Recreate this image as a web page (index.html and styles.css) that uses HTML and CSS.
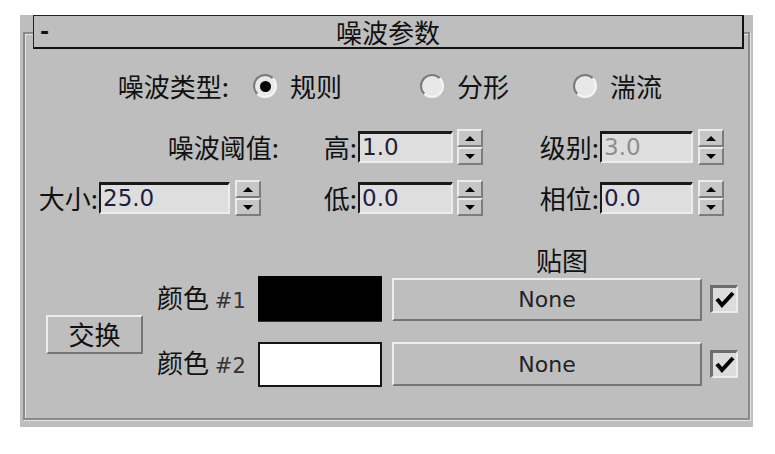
FILE: index.html
```html
<!DOCTYPE html>
<html lang="zh-CN">
<head>
<meta charset="UTF-8" />
<title>噪波参数</title>
<link rel="stylesheet" href="styles.css">
</head>
<body>
  <div class="rollout">
    <div class="rollout-title">
      <span class="collapse">-</span>
      <span class="title-text">噪波参数</span>
    </div>

    <div class="group">
      <!-- noise type -->
      <div class="row row-type">
        <span class="lbl lbl-type">噪波类型:</span>
        <span class="radio checked"></span><span class="opt">规则</span>
        <span class="radio radio-2"></span><span class="opt">分形</span>
        <span class="radio radio-3"></span><span class="opt">湍流</span>
      </div>

      <!-- threshold high / levels -->
      <div class="row row-spin row-high">
        <span class="lbl lbl-thresh">噪波阈值:</span>
        <span class="lbl lbl-mid">高:</span>
        <div class="num num-mid">1.0</div>
        <div class="spin"><span class="up"></span><span class="down"></span></div>
        <span class="lbl lbl-right">级别:</span>
        <div class="num num-right disabled">3.0</div>
        <div class="spin spin-right"><span class="up"></span><span class="down"></span></div>
      </div>

      <!-- size / low / phase -->
      <div class="row row-spin row-low">
        <span class="lbl lbl-size">大小:</span>
        <div class="num num-size">25.0</div>
        <div class="spin spin-size"><span class="up"></span><span class="down"></span></div>
        <span class="lbl lbl-low">低:</span>
        <div class="num num-mid">0.0</div>
        <div class="spin"><span class="up"></span><span class="down"></span></div>
        <span class="lbl lbl-right">相位:</span>
        <div class="num num-right">0.0</div>
        <div class="spin spin-right"><span class="up"></span><span class="down"></span></div>
      </div>

      <div class="row row-maps">
        <span class="maps-title">贴图</span>
      </div>

      <!-- colors -->
      <div class="colors">
        <button class="btn swap">交换</button>
        <div class="color-rows">
          <div class="color-row">
            <span class="color-lbl">颜色 <span class="idx">#1</span></span>
            <span class="swatch black"></span>
            <button class="btn map-btn">None</button>
            <span class="check">
              <svg width="22" height="20" viewBox="0 0 22 20"><path d="M3 9 L8 15 L19 3" fill="none" stroke="#000" stroke-width="4"/></svg>
            </span>
          </div>
          <div class="color-row row-2">
            <span class="color-lbl">颜色 <span class="idx">#2</span></span>
            <span class="swatch white"></span>
            <button class="btn map-btn">None</button>
            <span class="check">
              <svg width="22" height="20" viewBox="0 0 22 20"><path d="M3 9 L8 15 L19 3" fill="none" stroke="#000" stroke-width="4"/></svg>
            </span>
          </div>
        </div>
      </div>
    </div>
  </div>
</body>
</html>
```

FILE: styles.css
```css
* {
  box-sizing: border-box;
}
body {
  margin: 0;
  background: #fff;
}
.rollout {
  margin: 15px 0 0 20px;
  width: 733px;
  height: 412px;
  background: #bebebe;
  font-family: "Noto Sans CJK SC", sans-serif;
  font-size: 26px;
  line-height: 30px;
  color: #111;
}

/* title bar */
.rollout-title {
  position: relative;
  z-index: 1;
  margin-left: 13px;
  width: 711px;
  height: 34px;
  background: #bebebe;
  border-top: 1px solid #222;
  border-left: 1px solid #222;
  border-right: 2px solid #111;
  border-bottom: 2px solid #111;
  display: grid;
  grid-template-columns: 40px 1fr 40px;
  align-items: center;
}
.collapse {
  padding-left: 6px;
  font-family: "DejaVu Sans", sans-serif;
  font-weight: bold;
  font-size: 22px;
  line-height: 30px;
}
.title-text {
  text-align: center;
  line-height: 30px;
}

/* group frame */
.group {
  margin: -17px 0 0 3px;
  width: 727px;
  height: 388px;
  border: 2px solid #8a8a8a;
  box-shadow: inset 1px 1px 0 #e4e4e4, 1px 1px 0 #e4e4e4;
}
.row {
  display: flex;
  align-items: center;
}
.lbl {
  flex: none;
  text-align: right;
  white-space: nowrap;
}

/* noise type */
.row-type {
  margin-top: 37px;
  height: 30px;
}
.lbl-type { width: 204px; }
.radio {
  flex: none;
  width: 24px;
  height: 24px;
  margin-left: 24px;
  border-radius: 50%;
  border: 2px solid #f4f4f4;
  border-top-color: #7a7a7a;
  border-left-color: #7a7a7a;
  background: #e8e8e8;
  display: flex;
  align-items: center;
  justify-content: center;
}
.radio.checked::after {
  content: "";
  width: 11px;
  height: 11px;
  border-radius: 50%;
  background: #000;
}
.radio-2 { margin-left: 78px; }
.radio-3 { margin-left: 64px; }
.opt {
  margin-left: 13px;
}

/* spinners */
.row-spin { height: 36px; }
.row-high { margin-top: 28px; }
.row-low { margin-top: 15px; }
.lbl-thresh { width: 254px; }
.lbl-mid { width: 78px; }
.lbl-right { width: 116px; }
.lbl-size { width: 73px; }
.lbl-low { width: 96px; }
.num {
  flex: none;
  height: 32px;
  margin-left: 1px;
  padding-left: 2px;
  background: #dedede;
  border-top: 3px solid #1a1a1a;
  border-left: 2px solid #1a1a1a;
  border-right: 2px solid #ececec;
  border-bottom: 2px solid #ececec;
  font-family: "DejaVu Sans", sans-serif;
  font-size: 23px;
  line-height: 26px;
  color: #1e1e3c;
}
.num.disabled { color: #8e8e8e; }
.num-mid { width: 95px; }
.num-right { width: 93px; }
.num-size { width: 131px; }
.spin {
  flex: none;
  width: 26px;
  height: 36px;
  margin-left: 4px;
  display: flex;
  flex-direction: column;
}
.spin-right,
.spin-size { margin-left: 5px; }
.spin span {
  flex: 1;
  display: flex;
  align-items: center;
  justify-content: center;
  background: #c6c6c6;
  border-top: 2px solid #ececec;
  border-left: 2px solid #ececec;
  border-right: 2px solid #7c7c7c;
  border-bottom: 2px solid #7c7c7c;
}
.spin .up::after {
  content: "";
  border-left: 5px solid transparent;
  border-right: 5px solid transparent;
  border-bottom: 5px solid #000;
}
.spin .down::after {
  content: "";
  border-left: 5px solid transparent;
  border-right: 5px solid transparent;
  border-top: 5px solid #000;
}

/* maps */
.row-maps {
  margin-top: 29px;
  height: 30px;
}
.maps-title { margin-left: 511px; }

.colors {
  display: flex;
}
.btn {
  font-family: inherit;
  background: #bebebe;
  border-top: 2px solid #eeeeee;
  border-left: 2px solid #eeeeee;
  border-right: 2px solid #767676;
  border-bottom: 2px solid #767676;
  padding: 0;
  color: #111;
}
.swap {
  flex: none;
  align-self: center;
  margin: 6px 0 0 21px;
  width: 97px;
  height: 39px;
  font-size: 26px;
  line-height: 30px;
}
.color-rows {
  margin-left: 13px;
}
.color-row {
  display: flex;
  align-items: center;
  height: 48px;
}
.color-row.row-2 {
  margin-top: 18px;
  height: 46px;
}
.color-lbl {
  width: 96px;
  padding-left: 1px;
  white-space: nowrap;
}
.idx {
  font-family: "DejaVu Sans", sans-serif;
  font-size: 21px;
  color: #333;
}
.swatch {
  margin-left: 6px;
  width: 124px;
  height: 46px;
}
.swatch.black {
  background: #000;
  border-bottom: 1px solid #333;
}
.swatch.white {
  height: 45px;
  background: #fff;
  border: 2px solid #151515;
}
.map-btn {
  margin-left: 10px;
  width: 310px;
  height: 43px;
  font-family: "DejaVu Sans", sans-serif;
  font-size: 22px;
  color: #222;
}
.row-2 .map-btn { height: 44px; }
.check {
  margin-left: 8px;
  width: 28px;
  height: 28px;
  background: #dcdcdc;
  border-top: 3px solid #6e6e6e;
  border-left: 3px solid #6e6e6e;
  border-right: 2px solid #ececec;
  border-bottom: 2px solid #ececec;
  display: flex;
  align-items: center;
  justify-content: center;
}
```
